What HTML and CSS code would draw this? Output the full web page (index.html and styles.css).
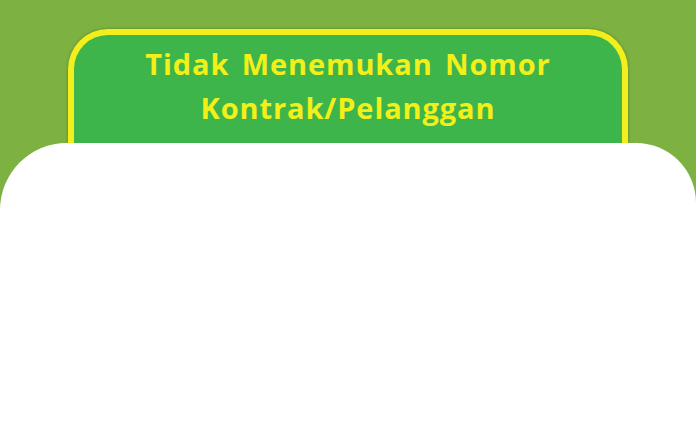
FILE: index.html
```html
<!DOCTYPE html>
<html>
<head>
<meta charset="utf-8">
<link rel="stylesheet" href="styles.css">
</head>
<body>
<div class="page">
  <header class="header">
    <div class="title-box">
      <h1 class="title">Tidak Menemukan Nomor<br>Kontrak/Pelanggan</h1>
    </div>
  </header>
  <main class="card"></main>
</div>
</body>
</html>
```
FILE: styles.css
```css
html, body {
  margin: 0;
  padding: 0;
  height: 100%;
}
body {
  background: #7db242;
  overflow: hidden;
}
.page {
  display: flex;
  flex-direction: column;
  height: 430px;
  width: 696px;
}
.header {
  padding: 29px 68px 0 68px;
  display: flex;
}
.title-box {
  flex: 1;
  height: 114px;
  box-sizing: border-box;
  background: #3db54a;
  border: 6px solid #f3ef1d;
  border-bottom: none;
  border-radius: 40px 40px 0 0;
  box-shadow: 0 0 3px rgba(40, 80, 20, 0.5);
  padding-top: 7px;
}
.title {
  margin: 0;
  text-align: center;
  font-family: "Open Sans", "DejaVu Sans", sans-serif;
  font-weight: 700;
  font-size: 29px;
  line-height: 44px;
  letter-spacing: 0.9px;
  word-spacing: 4px;
  color: #f2ef19;
}
.card {
  flex: 1;
  background: #ffffff;
  border-radius: 67px 60px 0 0;
}
```
